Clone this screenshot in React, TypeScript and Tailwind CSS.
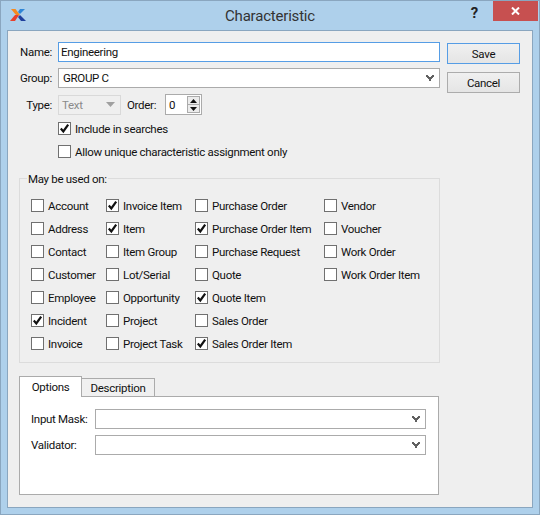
const font = '[font-family:"Roboto","Noto_Sans",sans-serif]';

function Chevron({ color = "#606060" }: { color?: string }) {
  return (
    <svg width="8" height="7" viewBox="0 0 8 7" className="shrink-0">
      <path d="M0 0h2v1h1v1h2V1h1V0h2v2H7v1H6v1H5v2H3V4H2V3H1V2H0z" fill={color} />
    </svg>
  );
}

function Combo({ value = "", className = "" }: { value?: string; className?: string }) {
  return (
    <div className={`flex h-5 items-center justify-between border border-[#ababab] bg-white pl-[4px] pr-[5px] ${className}`}>
      <span>{value}</span>
      <Chevron />
    </div>
  );
}

function Check({ label, checked = false }: { label: string; checked?: boolean }) {
  return (
    <div className="flex h-[13px] items-center gap-[4px] whitespace-nowrap">
      <span className="relative block size-[13px] shrink-0 border border-[#707070] bg-white">
        {checked && (
          <svg viewBox="0 0 11 11" className="absolute inset-0 size-[11px]">
            <path d="M1.800 5.600 4.300 8.400 9.200 1.600" fill="none" stroke="#111" strokeWidth="2.200" />
          </svg>
        )}
      </span>
      <span>{label}</span>
    </div>
  );
}

const cols: [string, boolean][][] = [
  [["Account", false], ["Address", false], ["Contact", false], ["Customer", false], ["Employee", false], ["Incident", true], ["Invoice", false]],
  [["Invoice Item", true], ["Item", true], ["Item Group", false], ["Lot/Serial", false], ["Opportunity", false], ["Project", false], ["Project Task", false]],
  [["Purchase Order", false], ["Purchase Order Item", true], ["Purchase Request", false], ["Quote", false], ["Quote Item", true], ["Sales Order", false], ["Sales Order Item", true]],
  [["Vendor", false], ["Voucher", false], ["Work Order", false], ["Work Order Item", false]],
];
const colWidths = ["w-[75px]", "w-[89px]", "w-[129px]", "w-auto"];

export default function App() {
  return (
    <div className={`flex h-[515px] w-[540px] flex-col border border-[#8aa6bf] bg-[#aed0eb] px-[6px] pb-[6px] text-[11.5px] leading-4 tracking-[-0.3px] text-[#111] ${font}`}>
      <div className="relative flex h-[29px] shrink-0 items-center justify-center text-[15px] tracking-[-0.2px] text-[#333]">
        <svg width="17" height="14" viewBox="0 0 17 14" className="absolute left-[3px] top-[7px]">
          <path d="M0 13 5 7h4l-4 6z" fill="#e8402c" />
          <path d="M1 1h4.500L10 7H6z" fill="#f58a1f" />
          <path d="M10 1h5l-5 5-2-2z" fill="#2f86d6" />
          <path d="M8 9l2-2 6 6h-5z" fill="#1f3f9c" />
        </svg>
        <span>Characteristic</span>
        <span className="absolute right-[55px] top-[2px] text-[15px] font-bold leading-5 text-[#222]">?</span>
        <div className="absolute top-0 right-[-5px] flex h-5 w-[45px] items-center justify-center bg-[#c75050]">
          <svg width="9" height="8" viewBox="0 0 9 8">
            <path d="M1 .5 8 7.500M8 .5 1 7.500" stroke="#fff" strokeWidth="2" />
          </svg>
        </div>
      </div>

      <div className="flex min-h-0 flex-1 gap-[7px] border border-[#8aa6bf] bg-[#efefef] pl-[11px] pt-[11px]">
        <div className="flex w-[421px] shrink-0 flex-col">
          <div className="flex h-5 items-center">
            <span className="w-[33px] text-right">Name:</span>
            <div className="ml-[6px] flex h-[20px] flex-1 items-center border border-[#569de5] bg-white pl-[2px]">Engineering</div>
          </div>
          <div className="mt-[6px] flex h-5 items-center">
            <span className="w-[33px] text-right">Group:</span>
            <Combo value="GROUP C" className="ml-[6px] flex-1" />
          </div>
          <div className="mt-[6px] flex h-[21px] items-center">
            <span className="w-[33px] text-right">Type:</span>
            <div className="ml-[6px] flex h-5 w-[63px] items-center justify-between border border-[#d9d9d9] bg-[#efefef] pl-[3px] pr-[5px] text-[#8a8a8a]">
              <span>Text</span>
              <svg width="9" height="5" viewBox="0 0 9 5"><path d="M0 0h9L4.500 5z" fill="#a0a0a0" /></svg>
            </div>
            <span className="ml-[6px] w-[32px]">Order:</span>
            <div className="ml-[6px] flex h-[21px] w-[37px] items-center justify-between border border-[#ababab] bg-white pl-[3px] pr-[1px]">
              <span>0</span>
              <div className="flex h-[17px] w-[13px] flex-col border border-[#ababab] bg-[#ececec]">
                <div className="flex flex-1 items-center justify-center border-b border-[#ababab]">
                  <svg width="7" height="4" viewBox="0 0 7 4"><path d="M0 4h7L3.500 0z" fill="#111" /></svg>
                </div>
                <div className="flex flex-1 items-center justify-center">
                  <svg width="7" height="4" viewBox="0 0 7 4"><path d="M0 0h7L3.500 4z" fill="#111" /></svg>
                </div>
              </div>
            </div>
          </div>
          <div className="ml-[39px] mt-[7px] flex flex-col gap-[10px]">
            <Check label="Include in searches" checked />
            <Check label="Allow unique characteristic assignment only" />
          </div>

          <div className="relative mt-[20px] h-[185px] border border-[#dcdcdc] pl-[11px] pt-[20px]">
            <span className="absolute -top-2 left-[7px] bg-[#efefef] px-[1px]">May be used on:</span>
            <div className="flex">
              {cols.map((col, i) => (
                <div key={i} className={`flex flex-col gap-[10px] ${colWidths[i]}`}>
                  {col.map(([label, checked]) => (
                    <Check key={label} label={label} checked={checked} />
                  ))}
                </div>
              ))}
            </div>
          </div>

          <div className="mt-[13px] flex h-5 items-end">
            <div className="relative z-10 -mb-[1px] flex h-[21px] w-[63px] items-center justify-center border border-b-0 border-[#ababab] bg-white">Options</div>
            <div className="flex h-[18px] w-[73px] items-center justify-center border border-b-0 border-l-0 border-[#ababab] bg-[#f0f0f0]">Description</div>
          </div>
          <div className="flex h-[99px] w-[420px] flex-col gap-[6px] border border-[#ababab] bg-white pl-[11px] pr-[12px] pt-[12px]">
            <div className="flex items-center">
              <span className="w-[64px] whitespace-nowrap">Input Mask:</span>
              <Combo className="flex-1" />
            </div>
            <div className="flex items-center">
              <span className="w-[64px]">Validator:</span>
              <Combo className="flex-1" />
            </div>
          </div>
        </div>

        <div className="mt-[1px] flex w-[73px] flex-col gap-[8px]">
          <button className="h-[21px] border border-[#569de5] bg-gradient-to-b from-[#f0f0f0] to-[#e5e5e5]">Save</button>
          <button className="h-[21px] border border-[#acacac] bg-gradient-to-b from-[#f0f0f0] to-[#e5e5e5]">Cancel</button>
        </div>
      </div>
    </div>
  );
}
